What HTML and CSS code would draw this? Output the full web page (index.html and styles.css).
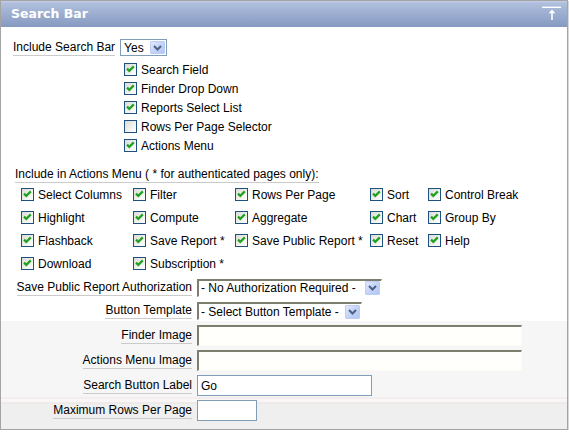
FILE: index.html
```html
<!DOCTYPE html>
<html lang="en">
<head>
<meta charset="utf-8">
<title>Search Bar</title>
<link rel="stylesheet" href="styles.css">
</head>
<body>
<div class="panel">
  <div class="panel-head">
    <h2 class="panel-title">Search Bar</h2>
    <span class="head-icon" title="Top">
      <svg width="20" height="16" viewBox="0 0 20 16">
        <rect x="0" y="1.6" width="19" height="1.4" fill="#ffffff"/>
        <polygon points="6.6,8.2 10,4.6 13.4,8.2" fill="#ffffff"/>
        <rect x="9.2" y="7.5" width="1.6" height="7.5" fill="#ffffff"/>
      </svg>
    </span>
  </div>
  <div class="panel-body">
    <div class="inline-row">
      <span class="lbl">Include Search Bar</span>
      <div class="sel sel-xp sel-yes">
        <span class="sel-text">Yes</span>
        <span class="sel-btn"><svg width="9" height="6" viewBox="0 0 9 6"><polyline points="1,1 4.5,4.5 8,1" fill="none" stroke="#4d6185" stroke-width="2"/></svg></span>
      </div>
    </div>

    <ul class="checklist">
      <li class="chk"><span class="box"><svg width="11" height="11" viewBox="0 0 11 11"><path d="M2 4.6 L4.3 6.9 L8.8 2.4" fill="none" stroke="#21a121" stroke-width="2.2"/></svg></span>Search Field</li>
      <li class="chk"><span class="box"><svg width="11" height="11" viewBox="0 0 11 11"><path d="M2 4.6 L4.3 6.9 L8.8 2.4" fill="none" stroke="#21a121" stroke-width="2.2"/></svg></span>Finder Drop Down</li>
      <li class="chk"><span class="box"><svg width="11" height="11" viewBox="0 0 11 11"><path d="M2 4.6 L4.3 6.9 L8.8 2.4" fill="none" stroke="#21a121" stroke-width="2.2"/></svg></span>Reports Select List</li>
      <li class="chk"><span class="box"></span>Rows Per Page Selector</li>
      <li class="chk"><span class="box"><svg width="11" height="11" viewBox="0 0 11 11"><path d="M2 4.6 L4.3 6.9 L8.8 2.4" fill="none" stroke="#21a121" stroke-width="2.2"/></svg></span>Actions Menu</li>
    </ul>

    <div class="section-label"><span class="lbl">Include in Actions Menu ( * for authenticated pages only):</span></div>

    <div class="chk-grid">
      <div class="chk"><span class="box"><svg width="11" height="11" viewBox="0 0 11 11"><path d="M2 4.6 L4.3 6.9 L8.8 2.4" fill="none" stroke="#21a121" stroke-width="2.2"/></svg></span>Select Columns</div>
      <div class="chk"><span class="box"><svg width="11" height="11" viewBox="0 0 11 11"><path d="M2 4.6 L4.3 6.9 L8.8 2.4" fill="none" stroke="#21a121" stroke-width="2.2"/></svg></span>Filter</div>
      <div class="chk"><span class="box"><svg width="11" height="11" viewBox="0 0 11 11"><path d="M2 4.6 L4.3 6.9 L8.8 2.4" fill="none" stroke="#21a121" stroke-width="2.2"/></svg></span>Rows Per Page</div>
      <div class="chk"><span class="box"><svg width="11" height="11" viewBox="0 0 11 11"><path d="M2 4.6 L4.3 6.9 L8.8 2.4" fill="none" stroke="#21a121" stroke-width="2.2"/></svg></span>Sort</div>
      <div class="chk"><span class="box"><svg width="11" height="11" viewBox="0 0 11 11"><path d="M2 4.6 L4.3 6.9 L8.8 2.4" fill="none" stroke="#21a121" stroke-width="2.2"/></svg></span>Control Break</div>

      <div class="chk"><span class="box"><svg width="11" height="11" viewBox="0 0 11 11"><path d="M2 4.6 L4.3 6.9 L8.8 2.4" fill="none" stroke="#21a121" stroke-width="2.2"/></svg></span>Highlight</div>
      <div class="chk"><span class="box"><svg width="11" height="11" viewBox="0 0 11 11"><path d="M2 4.6 L4.3 6.9 L8.8 2.4" fill="none" stroke="#21a121" stroke-width="2.2"/></svg></span>Compute</div>
      <div class="chk"><span class="box"><svg width="11" height="11" viewBox="0 0 11 11"><path d="M2 4.6 L4.3 6.9 L8.8 2.4" fill="none" stroke="#21a121" stroke-width="2.2"/></svg></span>Aggregate</div>
      <div class="chk"><span class="box"><svg width="11" height="11" viewBox="0 0 11 11"><path d="M2 4.6 L4.3 6.9 L8.8 2.4" fill="none" stroke="#21a121" stroke-width="2.2"/></svg></span>Chart</div>
      <div class="chk"><span class="box"><svg width="11" height="11" viewBox="0 0 11 11"><path d="M2 4.6 L4.3 6.9 L8.8 2.4" fill="none" stroke="#21a121" stroke-width="2.2"/></svg></span>Group By</div>

      <div class="chk"><span class="box"><svg width="11" height="11" viewBox="0 0 11 11"><path d="M2 4.6 L4.3 6.9 L8.8 2.4" fill="none" stroke="#21a121" stroke-width="2.2"/></svg></span>Flashback</div>
      <div class="chk"><span class="box"><svg width="11" height="11" viewBox="0 0 11 11"><path d="M2 4.6 L4.3 6.9 L8.8 2.4" fill="none" stroke="#21a121" stroke-width="2.2"/></svg></span>Save Report *</div>
      <div class="chk"><span class="box"><svg width="11" height="11" viewBox="0 0 11 11"><path d="M2 4.6 L4.3 6.9 L8.8 2.4" fill="none" stroke="#21a121" stroke-width="2.2"/></svg></span>Save Public Report *</div>
      <div class="chk"><span class="box"><svg width="11" height="11" viewBox="0 0 11 11"><path d="M2 4.6 L4.3 6.9 L8.8 2.4" fill="none" stroke="#21a121" stroke-width="2.2"/></svg></span>Reset</div>
      <div class="chk"><span class="box"><svg width="11" height="11" viewBox="0 0 11 11"><path d="M2 4.6 L4.3 6.9 L8.8 2.4" fill="none" stroke="#21a121" stroke-width="2.2"/></svg></span>Help</div>

      <div class="chk"><span class="box"><svg width="11" height="11" viewBox="0 0 11 11"><path d="M2 4.6 L4.3 6.9 L8.8 2.4" fill="none" stroke="#21a121" stroke-width="2.2"/></svg></span>Download</div>
      <div class="chk"><span class="box"><svg width="11" height="11" viewBox="0 0 11 11"><path d="M2 4.6 L4.3 6.9 L8.8 2.4" fill="none" stroke="#21a121" stroke-width="2.2"/></svg></span>Subscription *</div>
    </div>

    <div class="form">
      <div class="frow frow-23">
        <div class="frow-label"><span class="lbl">Save Public Report Authorization</span></div>
        <div class="sel sel-inset sel-auth">
          <span class="sel-text">- No Authorization Required -</span>
          <span class="sel-btn"><svg width="9" height="6" viewBox="0 0 9 6"><polyline points="1,1 4.5,4.5 8,1" fill="none" stroke="#4d6185" stroke-width="2"/></svg></span>
        </div>
      </div>
      <div class="frow frow-24">
        <div class="frow-label"><span class="lbl">Button Template</span></div>
        <div class="sel sel-inset sel-tmpl">
          <span class="sel-text">- Select Button Template -</span>
          <span class="sel-btn"><svg width="9" height="6" viewBox="0 0 9 6"><polyline points="1,1 4.5,4.5 8,1" fill="none" stroke="#4d6185" stroke-width="2"/></svg></span>
        </div>
      </div>
      <div class="frow">
        <div class="frow-label"><span class="lbl">Finder Image</span></div>
        <input class="inp inp-inset" type="text" value="">
      </div>
      <div class="frow">
        <div class="frow-label"><span class="lbl">Actions Menu Image</span></div>
        <input class="inp inp-inset" type="text" value="">
      </div>
      <div class="frow">
        <div class="frow-label"><span class="lbl">Search Button Label</span></div>
        <input class="inp inp-xp inp-label" type="text" value="Go">
      </div>
      <div class="frow">
        <div class="frow-label"><span class="lbl">Maximum Rows Per Page</span></div>
        <input class="inp inp-xp inp-max" type="text" value="">
      </div>
    </div>
  </div>
</div>
</body>
</html>
```

FILE: styles.css
```css
* {
  box-sizing: border-box;
}

body {
  margin: 0;
  background: #ffffff;
  font-family: "Liberation Sans", Arial, sans-serif;
  font-size: 12px;
  color: #000000;
}

.panel {
  width: 568px;
  border: 1px solid #a4a4a4;
  box-shadow: 1px 1px 0 #d8d8d8;
}

.panel-head {
  height: 26px;
  display: flex;
  align-items: center;
  justify-content: space-between;
  padding: 0 5px 2px 10px;
  background: linear-gradient(to bottom, #c6d0e6 0, #b0bfdc 2px, #9cadd0 13px, #8699c0 100%);
}

.panel-title {
  margin: 0;
  font-family: "DejaVu Sans", Verdana, sans-serif;
  font-weight: bold;
  font-size: 12.5px;
  color: #ffffff;
}

.head-icon svg {
  display: block;
}

.panel-body {
  padding: 12px 0 6px;
  background: linear-gradient(to bottom,
    #ffffff 0, #ffffff 294px,
    #f6f6f6 294px, #f6f6f6 370px,
    #f3edef 370px, #f3edef 372px,
    #faf6f6 372px, #faf6f6 375px,
    #efeaea 375px, #efeaea 377px,
    #efefef 377px);
}

.lbl {
  display: inline-block;
  line-height: 14px;
  padding-bottom: 1px;
  border-bottom: 1px solid #cbcbcb;
  white-space: nowrap;
}

.inline-row {
  display: flex;
  align-items: center;
  gap: 5px;
  height: 17px;
  padding-left: 12px;
}

.sel {
  display: flex;
  align-items: center;
  background: #ffffff;
  white-space: nowrap;
}

.sel-text {
  flex: 1;
  padding-left: 3px;
  line-height: 14px;
}

.sel-btn {
  flex: none;
  width: 15px;
  margin-right: 1px;
  display: flex;
  align-items: center;
  justify-content: center;
  border: 1px solid #bccdf6;
  border-radius: 1px;
  background: linear-gradient(135deg, #e2eafd 0, #c4d4f8 50%, #b2c5f3 100%);
}

.sel-btn svg {
  display: block;
}

.sel-xp {
  height: 17px;
  border: 1px solid #7f9db9;
}

.sel-xp .sel-btn {
  height: 13px;
}

.sel-yes {
  width: 47px;
}

.sel-inset {
  height: 18px;
  border-top: 2px solid #7e7e6e;
  border-left: 2px solid #7e7e6e;
  border-right: 1px solid #ffffff;
  border-bottom: 1px solid #ffffff;
}

.sel-inset .sel-text {
  padding-left: 2px;
}

.sel-inset .sel-btn {
  height: 14px;
}

.sel-auth {
  width: 185px;
}

.sel-tmpl {
  width: 165px;
}

.checklist {
  list-style: none;
  margin: 4px 0 0 123px;
  padding: 0;
}

.chk {
  display: flex;
  align-items: center;
  gap: 4px;
  height: 19px;
  white-space: nowrap;
}

.box {
  flex: none;
  width: 13px;
  height: 13px;
  border: 1px solid #1c5180;
  background: linear-gradient(135deg, #dcdcd6 0, #f2f2ee 60%, #ffffff 100%);
}

.box svg {
  display: block;
}

.section-label {
  margin-top: 12px;
  padding-left: 14px;
  height: 16px;
}

.chk-grid {
  display: grid;
  grid-template-columns: 112px 102px 135px 58px auto;
  grid-auto-rows: 23px;
  padding-left: 20px;
}

.chk-grid .chk {
  height: 23px;
}

.form {
  margin-top: 1px;
}

.frow {
  display: flex;
  align-items: center;
  height: 25px;
}

.frow-23 {
  height: 23px;
}

.frow-24 {
  height: 24px;
}

.frow-label {
  flex: none;
  width: 191px;
  margin-right: 5px;
  display: flex;
  justify-content: flex-end;
}

.inp {
  display: block;
  margin: 0;
  font: inherit;
  color: #000000;
  padding: 0 0 0 3px;
  outline: none;
}

.inp-inset {
  width: 325px;
  height: 21px;
  border-top: 2px solid #7e7e6e;
  border-left: 2px solid #7e7e6e;
  border-right: 1px solid #fbfbf3;
  border-bottom: 1px solid #fbfbf3;
  background: #fffffb;
}

.inp-xp {
  border: 1px solid #7f9db9;
  background: #ffffff;
}

.inp-label {
  width: 175px;
  height: 21px;
}

.inp-max {
  width: 60px;
  height: 21px;
}
```
